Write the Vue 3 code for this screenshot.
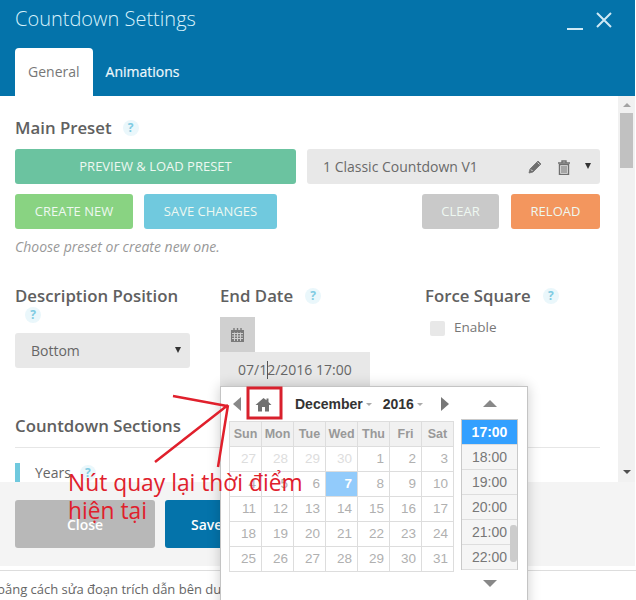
<script setup>
const heads = ['Sun', 'Mon', 'Tue', 'Wed', 'Thu', 'Fri', 'Sat']
const nums = [27, 28, 29, 30, 1, 2, 3, 4, 5, 6, 7, 8, 9, 10, 11, 12, 13, 14, 15, 16, 17, 18, 19, 20, 21, 22, 23, 24, 25, 26, 27, 28, 29, 30, 31]
const days = nums.map((n, i) => ({ n, old: i < 4, cur: i === 10 }))
const times = ['17:00', '18:00', '19:00', '20:00', '21:00', '22:00']
</script>

<template>
  <div class="page">
    <div class="modal">
      <header class="head">
        <div class="title-row">
          <h1 class="title">Countdown Settings</h1>
          <div class="win">
            <span class="min"></span>
            <svg width="16" height="16" viewBox="0 0 16 16"><path d="M1 1l14 14M15 1L1 15" stroke="#cfe9f5" stroke-width="2" fill="none" /></svg>
          </div>
        </div>
        <nav class="tabs">
          <span class="tab active">General</span>
          <span class="tab">Animations</span>
        </nav>
      </header>

      <div class="body">
        <div class="content">
          <div class="h-row"><h2 class="h">Main Preset</h2><span class="help">?</span></div>
          <div class="row r1">
            <button class="btn preview">PREVIEW &amp; LOAD PRESET</button>
            <div class="preset">
              <span class="preset-name">1 Classic Countdown V1</span>
              <svg class="ic-pen" width="15" height="15" viewBox="0 0 15 15"><path d="M1 14l1-4 8-8 3 3-8 8zM9 3l3 3" fill="#6f6f6f" stroke="#6f6f6f" stroke-width=".8" /><path d="M3 10.5l1.5 1.5" stroke="#e8e8e8" /><path d="M9.500 3.500l2 2" stroke="#e8e8e8" stroke-width=".8" /></svg>
              <svg class="ic-trash" width="14" height="15" viewBox="0 0 14 15"><path d="M1 3h12M5 3V1h4v2" stroke="#6f6f6f" stroke-width="1.4" fill="none" /><path d="M2.5 4.5h9V14.5h-9z" fill="none" stroke="#6f6f6f" stroke-width="1.4" /><path d="M5 6v7M7 6v7M9 6v7" stroke="#6f6f6f" stroke-width="1.1" /></svg>
              <span class="caret"></span>
            </div>
          </div>
          <div class="row r2">
            <button class="btn create">CREATE NEW</button>
            <button class="btn save">SAVE CHANGES</button>
            <span class="spacer"></span>
            <button class="btn clear">CLEAR</button>
            <button class="btn reload">RELOAD</button>
          </div>
          <p class="hint">Choose preset or create new one.</p>

          <div class="cols">
            <div class="col">
              <h2 class="h">Description Position</h2>
              <span class="help help-under">?</span>
              <div class="sel">Bottom<span class="caret"></span></div>
            </div>
            <div class="col">
              <div class="h-inline"><h2 class="h">End Date</h2><span class="help">?</span></div>
              <div class="cal-btn">
                <svg width="13" height="14" viewBox="0 0 13 14"><path d="M0 2h13v12H0z" fill="#7a7a7a" /><path d="M3 0v3M6.5 0v3M10 0v3" stroke="#7a7a7a" stroke-width="1.4" /><path d="M1 5.5h11M1 8h11M1 10.5h11M3.5 4.5v8.500M6.500 4.500v8.500M9.500 4.500v8.500" stroke="#cfcfcf" stroke-width="1" /></svg>
              </div>
              <div class="date">07/1<span class="cursor"></span>2/2016 17:00</div>
            </div>
            <div class="col">
              <div class="h-inline"><h2 class="h">Force Square</h2><span class="help">?</span></div>
              <label class="check"><span class="box"></span>Enable</label>
            </div>
          </div>

          <h2 class="h sections">Countdown Sections</h2>
          <hr class="rule" />
          <div class="years"><span class="bar"></span><span class="y-label">Years</span><span class="help">?</span></div>
        </div>
        <div class="scroll">
          <span class="tri up"></span>
          <span class="thumb"></span>
          <span class="tri down"></span>
        </div>
      </div>

      <footer class="foot">
        <button class="fbtn close">Close</button>
        <button class="fbtn primary">Save</button>
      </footer>
    </div>
    <div class="rule-bottom"></div>
    <p class="behind">bằng cách sửa đoạn trích dẫn bên dưới</p>

    <div class="picker">
      <div class="cal-side">
        <div class="cal-nav">
          <span class="arrow left"></span>
          <svg class="home" width="17" height="15" viewBox="0 0 17 15"><path d="M8.500 1L0.500 8h2.500v6.500h4v-4.500h3v4.500h4V8h2.500L13.500 5V1.500h-2v1.800z" fill="#707070" /></svg>
          <span class="nav-label month">December<i class="mini"></i></span>
          <span class="nav-label">2016<i class="mini"></i></span>
          <span class="arrow right"></span>
        </div>
        <div class="grid">
          <span v-for="d in heads" :key="d" class="cell hd">{{ d }}</span>
          <span v-for="(d, i) in days" :key="i" class="cell" :class="{ old: d.old, cur: d.cur }">{{ d.n }}</span>
        </div>
      </div>
      <div class="time-side">
        <span class="t-arrow t-up"></span>
        <div class="times">
          <span v-for="(t, i) in times" :key="t" class="time" :class="{ on: i === 0 }">{{ t }}</span>
          <span class="t-thumb"></span>
        </div>
        <span class="t-arrow t-down"></span>
      </div>
    </div>

    <svg class="marks" width="636" height="600" viewBox="0 0 636 600">
      <path d="M173 396l54 10M155 462l73-57M218 467l10-62" stroke="#e0202c" stroke-width="2.500" fill="none" />
      <rect x="248" y="388" width="33" height="30" fill="none" stroke="#d8202c" stroke-width="3" />
    </svg>
    <div class="note">Nút quay lại thời điểm<br />hiện tại</div>
  </div>
</template>

<style>
html, body { margin: 0; overflow: hidden; background: #fff; }
</style>

<style scoped>
.page { position: relative; width: 636px; height: 600px; overflow: hidden; font-family: "Open Sans", "Noto Sans", sans-serif; color: #666; }
.modal { width: 635px; }
.head { height: 96px; background: #0473aa; padding: 0 15px; box-sizing: border-box; display: flex; flex-direction: column; justify-content: space-between; }
.title-row { display: flex; justify-content: space-between; padding-top: 5px; }
.title { margin: 0; font-size: 20px; line-height: 27px; font-weight: 300; color: #d8f2fc; }
.win { display: flex; align-items: flex-start; gap: 13px; padding: 7px 8px 0 0; }
.min { width: 16px; height: 2px; background: #cfe9f5; margin-top: 16px; }
.tabs { display: flex; }
.tab { height: 48px; line-height: 48px; padding: 0 13px; font-size: 14px; font-weight: 400; color: #eef8fc; -webkit-text-stroke: .2px #eef8fc; }
.tab.active { background: #fff; color: #777; font-weight: 400; border-radius: 4px 4px 0 0; -webkit-text-stroke: 0; }

.body { height: 386px; display: flex; overflow: hidden; }
.content { width: 618px; box-sizing: border-box; padding: 21px 18px 0 15px; flex: none; }
.h-row { display: flex; align-items: center; gap: 11px; height: 22px; }
.h { margin: 0; font-size: 16.800px; line-height: 22px; font-weight: 600; color: #606060; white-space: nowrap; }
.help { display: inline-block; width: 16px; height: 16px; line-height: 16px; text-align: center; border-radius: 50%; background: #eaf7fb; color: #7fcbe2; font-size: 12px; font-weight: 700; }
.row { display: flex; gap: 11px; }
.r1 { margin-top: 10px; }
.r2 { margin-top: 10px; }
.btn { height: 35px; border: 0; border-radius: 3px; padding: 0 0 2px; color: #eef8f1; font: 400 13px "Open Sans", sans-serif; }
.preview { width: 281px; background: #6bc3a0; }
.preset { flex: 1; height: 35px; background: #e8e8e8; border-radius: 3px; display: flex; align-items: center; padding: 0 9px 0 16px; font-size: 14px; color: #6a6a6a; }
.preset-name { flex: 1; }
.ic-pen { margin-right: 0; }
.ic-trash { margin: 1px 14px 0 14px; }
.caret { width: 0; height: 0; border: 3.500px solid transparent; border-top: 6px solid #333; border-bottom: 0; margin-top: -2px; }
.create { width: 118px; background: #89d382; }
.save { width: 133px; background: #70c9de; }
.spacer { flex: 1; }
.clear { width: 77px; background: #c9c9c9; margin-right: 1px; }
.reload { width: 89px; background: #f3965e; }
.hint { margin: 9px 0 0; font-size: 14px; line-height: 18px; font-style: italic; color: #999; }
.cols { display: grid; grid-template-columns: 175px 175px 175px; column-gap: 30px; margin-top: 29px; }
.col { min-width: 0; }
.h-inline { display: flex; align-items: center; gap: 12px; height: 22px; }
.help-under { display: block; margin: 0 0 0 10px; }
.sel { margin-top: 10px; height: 35px; line-height: 35px; background: #e8e8e8; border-radius: 3px; padding: 0 9px 0 16px; font-size: 14px; display: flex; justify-content: space-between; align-items: center; color: #666; }
.cal-btn { width: 35px; height: 35px; background: #d0d0d0; margin-top: 10px; display: flex; align-items: center; justify-content: center; }
.date { width: 150px; height: 35px; line-height: 35px; background: #e8e8e8; box-sizing: border-box; padding-left: 18px; font-size: 14px; color: #666; display: block; }
.cursor { display: inline-block; width: 1px; height: 18px; background: #555; vertical-align: -4px; margin-right: -1px; }
.check { display: flex; align-items: center; gap: 9px; padding: 11px 0 0 5px; font-size: 13.500px; line-height: 18px; color: #777; }
.box { width: 15px; height: 15px; background: #e8e8e8; border-radius: 2px; margin-top: 3px; }
.sections { margin-top: 28px; }
.rule { margin: 10px 0 0; border: 0; border-top: 1px solid #e6e6e6; }
.years { display: flex; align-items: center; height: 19px; margin-top: 15px; font-size: 14px; line-height: 17px; font-weight: 500; color: #666; }
.bar { width: 5px; height: 19px; background: #70c9de; }
.y-label { margin: 0 9px 0 15px; }

.scroll { width: 17px; background: #f1f1f1; display: flex; flex-direction: column; align-items: center; position: relative; }
.tri { width: 0; height: 0; border: 4px solid transparent; }
.up { border-top: 0; border-bottom: 4px solid #a3a3a3; margin-top: 7px; }
.down { border-bottom: 0; border-top: 4px solid #505050; margin-top: auto; margin-bottom: 8px; }
.thumb { width: 13px; height: 55px; background: #c1c1c1; margin-top: 6px; }

.foot { height: 84px; background: #f4f4f4; padding: 18px 15px 0; box-sizing: border-box; display: flex; gap: 10px; }
.fbtn { width: 140px; height: 48px; border: 0; border-radius: 3px; font: 600 14px "Open Sans", sans-serif; color: #fff; }
.close { background: #b8b8b8; }
.primary { background: #0473aa; text-align: left; padding-left: 26px; }
.rule-bottom { margin-top: 4px; height: 1px; background: #ddd; }
.behind { margin: 8px 0 0 -3px; font-size: 13px; line-height: 20px; color: #666; white-space: nowrap; font-family: "Open Sans", sans-serif; }

.picker { position: absolute; left: 220px; top: 386px; width: 308px; height: 230px; box-sizing: border-box; background: #fff; border: 1px solid #c4c4c4; box-shadow: 0 0 12px rgba(0, 0, 0, .2); display: flex; font-family: "Liberation Sans", Arial, sans-serif; }
.cal-side { width: 240px; flex: none; padding-left: 8px; box-sizing: border-box; }
.cal-nav { height: 34px; display: flex; align-items: center; color: #333; font-size: 14px; font-weight: 700; }
.arrow { width: 0; height: 0; border: 7px solid transparent; }
.left { border-left: 0; border-right: 8px solid #888; margin-left: 4px; }
.right { border-right: 0; border-left: 8px solid #777; margin-left: 18px; }
.home { margin-left: 14px; }
.nav-label { white-space: nowrap; }
.month { margin-left: 23px; margin-right: 11px; }
.mini { display: inline-block; width: 0; height: 0; border: 3px solid transparent; border-top: 3px solid #aaa; border-bottom: 0; margin-left: 3px; vertical-align: 3px; }
.grid { display: grid; grid-template-columns: repeat(7, 32px); grid-auto-rows: 25px; width: 225px; box-sizing: border-box; border-top: 1px solid #ddd; border-left: 1px solid #ddd; }
.cell { border-right: 1px solid #ddd; border-bottom: 1px solid #ddd; box-sizing: border-box; font-size: 13.500px; line-height: 24px; text-align: right; padding-right: 5px; color: #b0b0b0; }
.hd { background: #f1f1f1; font-size: 12.500px; font-weight: 700; text-align: center; padding: 0; color: #999; }
.old { color: #ddd; }
.cur { background: #92cbfb; color: #fff; font-weight: 700; }
.time-side { width: 57px; margin-left: 0; display: flex; flex-direction: column; align-items: center; }
.times { width: 57px; height: 151px; box-sizing: border-box; border: 1px solid #c9c9c9; position: relative; display: flex; flex-direction: column; margin-top: 12px; }
.time { height: 25px; line-height: 24px; box-sizing: border-box; border-bottom: 1px solid #ddd; background: #f5f5f5; text-align: center; font-size: 14px; color: #777; }
.on { background: #33a0ff; color: #fff; font-weight: 700; }
.t-thumb { position: absolute; right: 0; top: 105px; width: 7px; height: 37px; border-radius: 3px; background: #ccc; }
.t-arrow { width: 0; height: 0; border: 7px solid transparent; }
.t-up { border-top: 0; border-bottom: 7px solid #888; margin-top: 13px; }
.t-down { border-bottom: 0; border-top: 7px solid #888; margin-top: 10px; }

.marks { position: absolute; left: 0; top: 0; pointer-events: none; }
.note { position: absolute; left: 68px; top: 469px; font-family: "Open Sans", sans-serif; font-size: 22.800px; line-height: 28px; color: #e0202c; white-space: nowrap; }
</style>
